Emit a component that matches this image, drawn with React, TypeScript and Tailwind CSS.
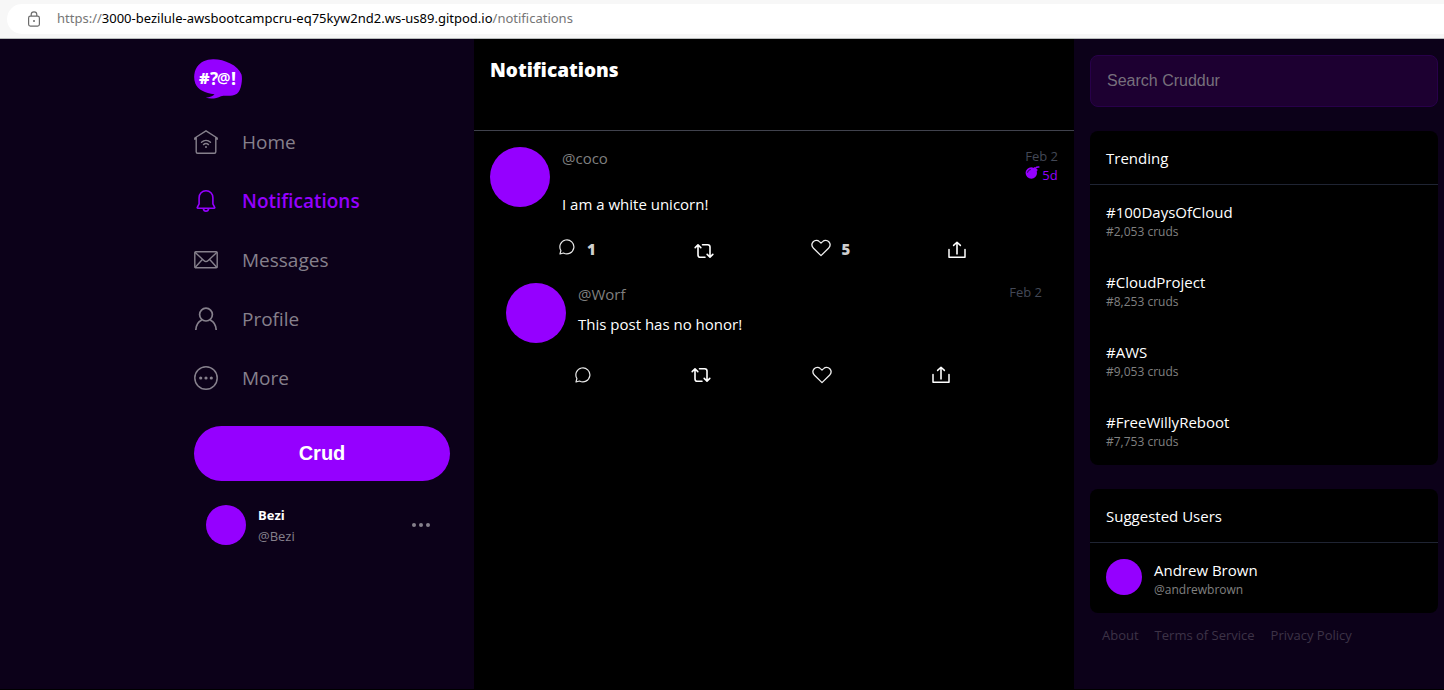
import type { ReactNode } from "react";

function LockIcon() {
  return (
    <svg width="14" height="16" viewBox="0 0 14 16" fill="none" stroke="#6b6b6b" strokeWidth="1.2">
      <rect x="1.6" y="5.1" width="10.8" height="10" rx="1.8" />
      <path d="M4.2 5V3.6a2.8 2.8 0 0 1 5.6 0V5" />
      <circle cx="7" cy="10" r="1" fill="#6b6b6b" stroke="none" />
    </svg>
  );
}

function Logo() {
  return (
    <svg width="48" height="40" viewBox="0 0 48 40" role="img" aria-label="Cruddur">
      <path
        fill="#9500ff"
        d="M19 0.2C30 0 44 6 47.5 15.5c1 4 .3 11-1.8 15.500-1.200 3-3.700 5-7.200 5.500-4.500.6-8-.3-11.500.8-4.500 2.300-10 3-15.200 1.500 3.800-.8 7.500-1.900 8.700-3.600C11 33.900 4 31 1.300 24.500-.6 19.500-.2 13 3 8 6.500 2.800 12 .400 19 .2Z"
      />
      <text x="5" y="25" fill="#fff" fontFamily="Open Sans, sans-serif" fontWeight="800" fontSize="16">
        #
      </text>
      <text x="16" y="26" fill="#fff" fontFamily="Noto Sans, sans-serif" fontWeight="700" fontSize="17">
        ?
      </text>
      <text x="23" y="24" fill="#fff" fontFamily="Noto Sans, sans-serif" fontWeight="600" fontSize="15">
        @
      </text>
      <text x="37" y="26" fill="#fff" fontFamily="Noto Sans, sans-serif" fontWeight="700" fontSize="18">
        !
      </text>
    </svg>
  );
}

function NavSvg({ children }: { children: ReactNode }) {
  return (
    <svg
      className="mb-0.5 shrink-0"
      width="24"
      height="24"
      viewBox="0 0 24 24"
      fill="none"
      stroke="currentColor"
      strokeWidth="1.4"
      strokeLinecap="round"
      strokeLinejoin="round"
    >
      {children}
    </svg>
  );
}

const homeIcon = (
  <NavSvg>
    <path d="M.8 9.300V8L12 .8 23.200 8v1.300M2.200 7.500v14.200c0 .9.500 1.500 1.400 1.500h16.800c.9 0 1.400-.6 1.400-1.500V7.500" />
    <path d="M7.500 12.300c2.600-2.400 6.400-2.400 9 0M9.500 14.600c1.500-1.300 3.500-1.300 5 0" />
    <circle cx="12" cy="17" r="1" fill="currentColor" stroke="none" />
  </NavSvg>
);

const bellIcon = (
  <NavSvg>
    <path
      strokeWidth="1.6"
      d="M12 1.800c-4 0-6.900 3-6.900 6.900v6.100l-1.800 3.500c-.2.500 0 .9.500.9h16.400c.5 0 .7-.4.5-.9l-1.800-3.500V8.700c0-3.900-2.900-6.900-6.900-6.900ZM9.300 19.400c.2 1.700 1.200 2.800 2.700 2.800s2.500-1.100 2.700-2.800"
    />
  </NavSvg>
);

const mailIcon = (
  <NavSvg>
    <rect x=".8" y="3.800" width="22.400" height="16" rx="1" />
    <path d="m1.300 4.500 8.500 8.100c1.300 1.200 3.100 1.200 4.400 0l8.500-8.100M1.300 19.300l7-7.800M22.700 19.300l-7-7.800" />
  </NavSvg>
);

const profileIcon = (
  <NavSvg>
    <circle cx="12" cy="7.600" r="6.400" strokeWidth="1.700" />
    <path strokeWidth="1.700" strokeLinecap="butt" d="M1.800 23c.2-4.700 2.200-8.200 6-10M22.200 23c-.2-4.700-2.200-8.200-6-10" />
  </NavSvg>
);

const moreIcon = (
  <NavSvg>
    <circle cx="12" cy="12" r="11.200" strokeWidth="1.500" />
    <g fill="currentColor" stroke="none">
      <circle cx="6.700" cy="12" r="1.600" />
      <circle cx="12" cy="12" r="1.600" />
      <circle cx="17.300" cy="12" r="1.600" />
    </g>
  </NavSvg>
);

const navItems = [
  { label: "Home", icon: homeIcon, active: false },
  { label: "Notifications", icon: bellIcon, active: true },
  { label: "Messages", icon: mailIcon, active: false },
  { label: "Profile", icon: profileIcon, active: false },
  { label: "More", icon: moreIcon, active: false },
];

function ReplyIcon() {
  return (
    <svg width="16" height="16" viewBox="0 0 16 16" fill="none" stroke="#e8e8e8" strokeWidth="1.200" strokeLinejoin="round">
      <path d="M1.900 11.500A7 7 0 1 1 4.500 14L1 15Z" />
    </svg>
  );
}

function RepostIcon() {
  return (
    <svg width="20" height="16" viewBox="0 0 20 16" fill="none" stroke="#fff" strokeWidth="1.600" strokeLinecap="round" strokeLinejoin="round">
      <path d="M1.200 4.600 4 1.800l2.800 2.800M4 2v10c0 1.600.7 2.300 2.300 2.300h4.700M18.800 11.400 16 14.200l-2.800-2.800M16 14V4c0-1.600-.7-2.300-2.300-2.300H8.500" />
    </svg>
  );
}

function HeartIcon() {
  return (
    <svg width="20" height="18" viewBox="0 0 20 18" fill="none" stroke="#f0f0f0" strokeWidth="1.300" strokeLinejoin="round">
      <path d="M10 16.600 2.500 9.200C.7 7.300.6 4.500 2.200 2.700c1.700-1.800 4.500-1.800 6.200-.1L10 4.100l1.600-1.500c1.700-1.700 4.500-1.700 6.200.1 1.600 1.800 1.500 4.600-.3 6.500Z" />
    </svg>
  );
}

function ShareIcon() {
  return (
    <svg width="18" height="18" viewBox="0 0 18 18" fill="none" stroke="#fff" strokeWidth="1.500" strokeLinecap="round" strokeLinejoin="round">
      <path d="M1 8.500v7.800h16V8.500" />
      <path stroke="#ccc" strokeWidth="2" strokeLinecap="butt" d="M9 13.500V2" />
      <path d="M5.600 4.400 9 1.200l3.400 3.200" />
    </svg>
  );
}

function BombIcon() {
  return (
    <svg width="15" height="13" viewBox="0 0 15 13">
      <circle cx="6.300" cy="7" r="5.700" fill="#9500ff" />
      <path d="M7.500 3 9.700.9l3.200 3.200L10.800 6Z" fill="#9500ff" />
      <path d="M10.500 2c1.300-1.300 2.300-.9 3.900-1" fill="none" stroke="#9500ff" strokeWidth="1.300" />
      <path d="M2.600 6.600c.3-1.700 1.400-2.700 3-3" fill="none" stroke="#1c0030" strokeWidth="1" />
    </svg>
  );
}

function Count({ value }: { value: number }) {
  return <span className="text-[15px] font-extrabold leading-5 text-[#cfcfcf]">{value}</span>;
}

type PostProps = {
  handle: string;
  message: string;
  expires?: string;
  replies?: number;
  likes?: number;
};

function Post({ handle, message, expires, replies, likes }: PostProps) {
  const counted = replies !== undefined;
  return (
    <article>
      <div className="flex gap-3">
        <div className="size-[60px] shrink-0 rounded-full bg-[#9500ff]" />
        <div className="min-w-0 flex-1">
          <div className="flex items-start justify-between">
            <a href="#profile" className="text-[15px] leading-[22px] text-[#7f7f7f]">
              {handle}
            </a>
            <div className="text-right text-[13px] leading-[19px] text-[#434856]">
              <div>Feb 2</div>
              {expires && (
                <div className="flex items-start gap-0.5 text-[#9500ff]">
                  <BombIcon />
                  <span>{expires}</span>
                </div>
              )}
            </div>
          </div>
          <p className="mt-[7px] text-[15px] leading-6 text-white">{message}</p>
        </div>
      </div>
      <div className={`mt-[23px] flex justify-between pr-[92px] pl-[69px] ${counted ? "items-end" : "items-center"}`}>
        <button type="button" aria-label="Reply" className={`flex gap-3 ${counted ? "h-5 items-start" : "items-center"}`}>
          <ReplyIcon />
          {counted && <Count value={replies} />}
        </button>
        <button type="button" aria-label="Repost">
          <RepostIcon />
        </button>
        <button type="button" aria-label="Like" className={`flex gap-2.5 ${counted ? "h-5 items-start" : "items-center"}`}>
          <HeartIcon />
          {likes !== undefined && <Count value={likes} />}
        </button>
        <button type="button" aria-label="Share">
          <ShareIcon />
        </button>
      </div>
    </article>
  );
}

const trends = [
  { tag: "#100DaysOfCloud", count: "#2,053 cruds" },
  { tag: "#CloudProject", count: "#8,253 cruds" },
  { tag: "#AWS", count: "#9,053 cruds" },
  { tag: "#FreeWillyReboot", count: "#7,753 cruds" },
];

function Panel({ title, children }: { title: string; children: ReactNode }) {
  return (
    <section className="mt-6 rounded-lg bg-black">
      <h2 className="border-b border-[#1f2433] px-4 pt-4 pb-[15px] text-[15px] leading-[22px] text-white">{title}</h2>
      {children}
    </section>
  );
}

export default function App() {
  return (
    <div className="flex min-h-screen flex-col bg-black font-['Open_Sans','Noto_Sans',sans-serif]">
      <header className="flex border-b border-[#b8bcbc] bg-[#f7f7f7] pt-1 pb-1 pl-[7px]">
        <div className="flex h-[30px] flex-1 items-center gap-4 rounded-l-full bg-white pl-5 font-['Noto_Sans',sans-serif] text-[13px] text-[#767676]">
          <button type="button" aria-label="Site information">
            <LockIcon />
          </button>
          <span>
            https://<span className="text-black">3000-bezilule-awsbootcampcru-eq75kyw2nd2.ws-us89.gitpod.io</span>
            /notifications
          </span>
        </div>
      </header>

      <div className="mb-px grid flex-1 grid-cols-[minmax(280px,1fr)_minmax(0,600px)_370px] bg-[#0c0119]">
        <nav className="flex justify-end">
          <div className="w-[280px] pt-5 pr-6">
            <Logo />
            <ul className="mt-[14px]">
              {navItems.map((item) => (
                <li key={item.label}>
                  <a
                    href={`#${item.label.toLowerCase()}`}
                    className={`flex h-[59px] items-center gap-6 text-[19px] ${
                      item.active ? "font-semibold text-[#9500ff]" : "text-[#86808c]"
                    }`}
                  >
                    {item.icon}
                    {item.label}
                  </a>
                </li>
              ))}
            </ul>
            <button
              type="button"
              className="mt-[18px] h-[55px] w-full rounded-full bg-[#9500ff] pb-0.5 font-['Liberation_Sans',sans-serif] text-xl font-bold text-white"
            >
              Crud
            </button>
            <div className="mt-6 flex items-start gap-3 px-3">
              <div className="size-10 rounded-full bg-[#9500ff]" />
              <div className="flex-1 text-[13px] leading-[21px]">
                <div className="font-bold text-white">Bezi</div>
                <div className="text-[#86808c]">@Bezi</div>
              </div>
              <button type="button" aria-label="Account options" className="h-10 pr-[7px]">
                <svg width="20" height="6" viewBox="0 0 20 6" fill="#86808c">
                  <circle cx="3" cy="3" r="2" />
                  <circle cx="10" cy="3" r="2" />
                  <circle cx="17" cy="3" r="2" />
                </svg>
              </button>
            </div>
          </div>
        </nav>

        <main className="bg-black">
          <div className="border-b border-[#40424d] px-4 pt-[17px] pb-[46px]">
            <h1 className="text-[19px] leading-7 font-extrabold text-white">Notifications</h1>
          </div>
          <div className="p-4">
            <Post handle="@coco" message="I am a white unicorn!" expires="5d" replies={1} likes={5} />
            <div className="px-4 pt-6">
              <Post handle="@Worf" message="This post has no honor!" />
            </div>
          </div>
        </main>

        <aside className="pt-4 pr-1.5 pl-4">
          <input
            type="search"
            aria-label="Search Cruddur"
            placeholder="Search Cruddur"
            className="block h-[52px] w-full rounded-lg border border-[#28004a] bg-[#1d0031] px-4 font-['Liberation_Sans',sans-serif] text-base text-white placeholder:text-[#77707c]"
          />
          <Panel title="Trending">
            <ul>
              {trends.map((trend) => (
                <li key={trend.tag}>
                  <a href="#trending" className="block px-4 pt-4 pb-[14px]">
                    <div className="text-[15px] leading-[22px] text-white">{trend.tag}</div>
                    <div className="text-xs leading-[18px] text-[#808080]">{trend.count}</div>
                  </a>
                </li>
              ))}
            </ul>
          </Panel>
          <Panel title="Suggested Users">
            <a href="#andrewbrown" className="flex items-start gap-3 px-4 pt-4 pb-[14px]">
              <div className="size-9 rounded-full bg-[#9500ff]" />
              <div>
                <div className="text-[15px] leading-[22px] text-white">Andrew Brown</div>
                <div className="text-xs leading-[18px] text-[#808080]">@andrewbrown</div>
              </div>
            </a>
          </Panel>
          <footer className="flex gap-4 px-3 pt-3 text-[13px] leading-5 text-[#3d3347]">
            <a href="#about">About</a>
            <a href="#terms">Terms of Service</a>
            <a href="#privacy">Privacy Policy</a>
          </footer>
        </aside>
      </div>
    </div>
  );
}
